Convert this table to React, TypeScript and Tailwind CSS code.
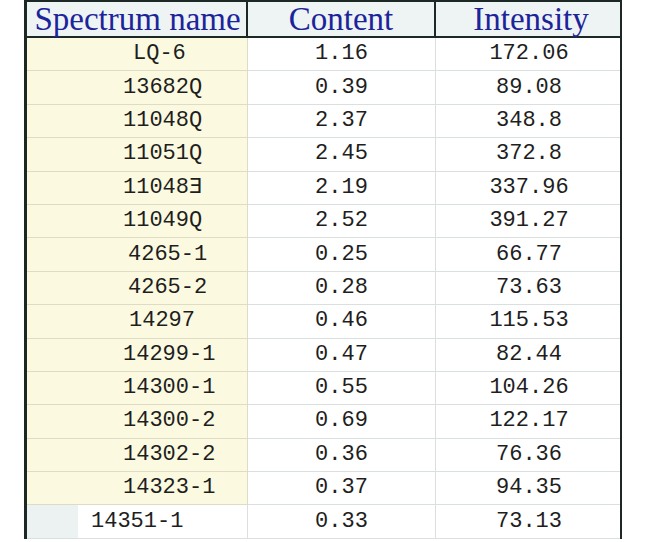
const rows = [
    { name: 'LQ-6', pad: 'pl-[106px]', content: '1.16', intensity: '172.06' },
    { name: '13682Q', pad: 'pl-[96px]', content: '0.39', intensity: '89.08' },
    { name: '11048Q', pad: 'pl-[96px]', content: '2.37', intensity: '348.8' },
    { name: '11051Q', pad: 'pl-[96px]', content: '2.45', intensity: '372.8' },
    { name: '11048Ǝ', pad: 'pl-[96px]', content: '2.19', intensity: '337.96' },
    { name: '11049Q', pad: 'pl-[96px]', content: '2.52', intensity: '391.27' },
    { name: '4265-1', pad: 'pl-[101px]', content: '0.25', intensity: '66.77' },
    { name: '4265-2', pad: 'pl-[101px]', content: '0.28', intensity: '73.63' },
    { name: '14297', pad: 'pl-[102px]', content: '0.46', intensity: '115.53' },
    { name: '14299-1', pad: 'pl-[96px]', content: '0.47', intensity: '82.44' },
    { name: '14300-1', pad: 'pl-[96px]', content: '0.55', intensity: '104.26' },
    { name: '14300-2', pad: 'pl-[96px]', content: '0.69', intensity: '122.17' },
    { name: '14302-2', pad: 'pl-[96px]', content: '0.36', intensity: '76.36' },
    { name: '14323-1', pad: 'pl-[96px]', content: '0.37', intensity: '94.35' },
];

export default function App() {
    return (
        <div className="w-[651px] h-[542px] bg-white overflow-hidden">
            <div className="ml-[24px] w-[598px] border-l-[3px] border-r-2 border-t-2 border-[#1b2826]">
                {/* Header */}
                <div className="flex h-[36px] border-b-2 border-[#1b2826] bg-[#eef3f4] font-['Liberation_Serif',serif] text-[33px] leading-none text-[#1c249a]">
                    <div className="w-[221px] border-r-2 border-[#1b2826] flex items-center justify-center pl-[2px]">
                        Spectrum name
                    </div>
                    <div className="w-[188px] border-r-2 border-[#1b2826] flex items-center justify-center">
                        Content
                    </div>
                    <div className="w-[184px] flex items-center justify-center pl-[6px]">
                        Intensity
                    </div>
                </div>

                {/* Body */}
                <div className="font-['Liberation_Mono',monospace] text-[22px] leading-none text-[#1e1e1e]">
                    {rows.map((r) => (
                        <div key={r.name} className="flex h-[33.4px]">
                            <div className={`w-[221px] flex items-center bg-[#fbfae0] border-b border-r border-[#dedcc4] ${r.pad}`}>
                                {r.name}
                            </div>
                            <div className="w-[188px] flex items-center justify-center border-b border-r border-[#dadfdf]">
                                {r.content}
                            </div>
                            <div className="w-[184px] flex items-center justify-center border-b border-[#dadfdf] pl-[2px]">
                                {r.intensity}
                            </div>
                        </div>
                    ))}
                    <div className="flex h-[33.4px]">
                        <div className="w-[221px] flex items-center border-b border-r border-[#dadfdf]">
                            <div className="w-[51px] h-full bg-[#ecf2f2]" />
                            <span className="pl-[13px]">14351-1</span>
                        </div>
                        <div className="w-[188px] flex items-center justify-center border-b border-r border-[#dadfdf]">
                            0.33
                        </div>
                        <div className="w-[184px] flex items-center justify-center border-b border-[#dadfdf] pl-[2px]">
                            73.13
                        </div>
                    </div>
                </div>
            </div>
        </div>
    );
}
